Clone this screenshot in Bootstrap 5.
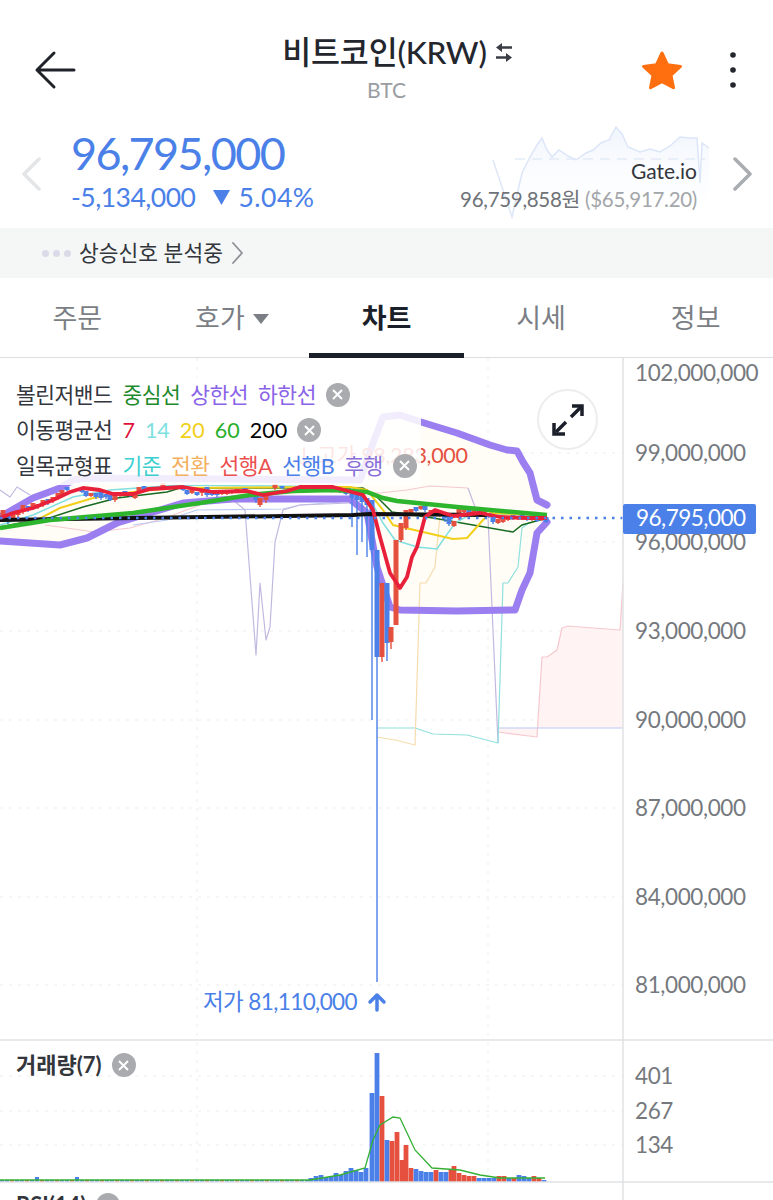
<!DOCTYPE html>
<html lang="ko">
<head>
  <meta charset="UTF-8">
  <meta name="viewport" content="width=device-width, initial-scale=1">
  <title>비트코인(KRW) 차트</title>
  <link href="https://cdn.jsdelivr.net/npm/bootstrap@5.3.0/dist/css/bootstrap.min.css" rel="stylesheet">
  <style>
    body {
      font-family: Lato, "Noto Sans CJK KR", sans-serif;
      background: #fff;
      color: #23262d;
      overflow: hidden;
    }
    .app-screen { width: 773px; height: 1200px; overflow: hidden; }
    .top-head { height: 125px; position: relative; }
    .head-back { left: 34px; top: 50px; }
    .head-center { padding-top: 28px; }
    .head-title { font-size: 31.5px; line-height: 48px; letter-spacing: -.2px; font-weight: 500; padding-left: 22px; }
    .head-sub { font-size: 21px; line-height: 28px; color: #9a9da1; }
    .head-actions { right: 36px; top: 50px; }
    .price-row { height: 103px; }
    .price-main { font-size: 45px; line-height: 56px; color: #4a80e8; letter-spacing: -1.6px; }
    .price-change { font-size: 26.5px; line-height: 32px; color: #4a80e8; letter-spacing: -.5px; }
    .price-pct { letter-spacing: .5px; }
    .price-left { padding-left: 71px; }
    .side-chev { width: 24px; top: 32px; }
    .spark-box { width: 773px; height: 103px; left: 0; top: 0; }
    .price-right { right: 76px; top: 32px; text-align: right; }
    .gate-name { font-size: 21px; line-height: 28px; color: #33363c; }
    .gate-price { font-size: 20.5px; line-height: 28px; color: #6f7378; letter-spacing: -.3px; }
    .gate-price span { color: #a3a6aa; }
    .signal-bar { height: 50px; background: #f5f6f6; padding-left: 42px; font-size: 21.5px; color: #33363c; }
    .signal-dot { width: 7px; height: 7px; border-radius: 50%; background: #d9dce8; }
    .tab-bar { height: 80px; border-bottom: 1px solid #dcdde0; }
    .tab-item { width: 20%; font-size: 27px; color: #7b7f85; text-decoration: none; margin-bottom: -1px; padding-top: 6px; border-bottom: 5px solid transparent; }
    .tab-item.is-on { color: #1b1f2a; font-weight: 700; border-bottom-color: #1b1f2a; }
    .tab-caret { width: 0; height: 0; border-left: 8px solid transparent; border-right: 8px solid transparent; border-top: 10px solid #7b7f85; margin-left: 8px; }
    .chart-wrap { height: 842px; }
    .chart-svg { display: block; }
    .axis-tx { font-size: 22.5px; fill: #75797e; letter-spacing: -.4px; }
    .legend-box { left: 0; top: 19px; width: 421px; height: 108px; padding: 0 0 0 16px; background: rgba(255,255,255,.86); font-size: 21.5px; }
    .legend-row { height: 35.5px; color: #33363c; letter-spacing: -.5px; column-gap: 10px; }
    .legend-num { letter-spacing: 0; }
    .close-dot { width: 24px; height: 24px; border-radius: 50%; background: #a9abae; flex: none; }
    .expand-btn { right: 175px; top: 31px; width: 61px; height: 61px; border-radius: 50%; border: 2px solid #eceded; background: #fff; }
    .vol-label { left: 16px; top: 692px; font-size: 22px; font-weight: 700; color: #33363c; line-height: 30px; column-gap: 10px; }
    .rsi-label { left: 16px; top: 832px; font-size: 22px; font-weight: 700; color: #33363c; line-height: 30px; column-gap: 10px; }
    .c-green { color: #1f8a2d; } .c-purple { color: #8a63e8; } .c-red { color: #e0103a; }
    .c-sky { color: #7fdfe0; } .c-yellow { color: #f2cf1a; } .c-lime { color: #2ab02a; } .c-black { color: #000; }
    .c-teal { color: #3ccfd0; } .c-orange { color: #f4b060; } .c-coral { color: #ec5050; } .c-blue { color: #4a80e8; } .c-violet { color: #8a6fd8; }
  </style>
</head>
<body>
  <div class="app-screen">
    <!-- header -->
    <header class="top-head text-center">
      <svg class="head-back position-absolute" width="42" height="40" viewBox="0 0 42 40" fill="none" stroke="#1f2229" stroke-width="3" stroke-linecap="round" stroke-linejoin="round"><path d="M40 20H3M20 3 3 20l17 17"/></svg>
      <div class="head-center">
        <div class="head-title d-flex justify-content-center align-items-center gap-2">
          <span>비트코인(KRW)</span>
          <svg width="18" height="21" viewBox="0 0 18 21" fill="#3a3d44"><path d="M7 1v3.200h10v2.600H7V10L1 5.500zM11 11l6 4.500-6 4.500v-3.200H1v-2.600h10z"/></svg>
        </div>
        <div class="head-sub">BTC</div>
      </div>
      <div class="head-actions position-absolute d-flex align-items-center">
        <svg width="42" height="40" viewBox="0 0 42 40" fill="#ff6f0f"><path stroke="#ff6f0f" stroke-width="3" stroke-linejoin="round" d="M21 3l5.600 11.800 12.900 1.600-9.500 8.800 2.500 12.600L21 31.600 9.500 37.800 12 25.200 2.500 16.400l12.900-1.600z"/></svg>
        <svg style="margin-left:46px" width="8" height="40" viewBox="0 0 8 40" fill="#23262d"><circle cx="4" cy="5" r="2.800"/><circle cx="4" cy="20" r="2.800"/><circle cx="4" cy="35" r="2.800"/></svg>
      </div>
    </header>

    <!-- price -->
    <section class="price-row position-relative">
      <svg class="spark-box position-absolute" viewBox="0 125 773 103" fill="none">
        <defs><linearGradient id="sparkFill" x1="0" y1="0" x2="0" y2="1"><stop offset="0" stop-color="#e6eefb" stop-opacity=".6"/><stop offset="1" stop-color="#fff" stop-opacity="0"/></linearGradient></defs>
        <path fill="url(#sparkFill)" d="M512 217 522 173 530 157 537 145 542 138 547 150 552 157 559 150 568 156 576 160 586 153 593 150 601 143 609 140 616 127 622 134 628 147 640 152 650 149 660 152 670 146 680 137 690 138 697 138 700 183 702 143 709 148V225H512z"/>
        <path stroke="#e4ebf8" stroke-dasharray="10 7" stroke-width="1.500" d="M515 159H705"/>
        <path stroke="#dce6f8" stroke-width="1.500" d="M493 160 512 217 522 173 530 157 537 145 542 138 547 150 552 157 559 150 568 156 576 160 586 153 593 150 601 143 609 140 616 127 622 134 628 147 640 152 650 149 660 152 670 146 680 137 690 138 697 138 700 183 702 143 709 148"/>
      </svg>
      <svg class="side-chev position-absolute" style="left:20px" height="34" viewBox="0 0 24 34" fill="none" stroke="#e3e5e7" stroke-width="3.500" stroke-linecap="round" stroke-linejoin="round"><path d="M19 2 4 17l15 15"/></svg>
      <svg class="side-chev position-absolute" style="left:731px" height="34" viewBox="0 0 24 34" fill="none" stroke="#a9acb0" stroke-width="3.500" stroke-linecap="round" stroke-linejoin="round"><path d="M4 2l15 15L4 32"/></svg>
      <div class="price-left position-relative">
        <div class="price-main">96,795,000</div>
        <div class="price-change d-flex align-items-center">
          <span>-5,134,000</span>
          <svg style="margin:0 8px 0 18px" width="17" height="16" viewBox="0 0 17 16" fill="#4a80e8"><path d="M0 1h17L8.500 16z"/></svg>
          <span class="price-pct">5.04%</span>
        </div>
      </div>
      <div class="price-right position-absolute">
        <div class="gate-name">Gate.io</div>
        <div class="gate-price">96,759,858원 <span>($65,917.20)</span></div>
      </div>
    </section>

    <!-- signal -->
    <div class="signal-bar d-flex align-items-center">
      <span class="signal-dot me-1"></span><span class="signal-dot me-1"></span><span class="signal-dot"></span>
      <span class="ms-2">상승신호 분석중</span>
      <svg class="ms-2" width="13" height="24" viewBox="0 0 13 24" fill="none" stroke="#8d9095" stroke-width="1.800" stroke-linecap="round" stroke-linejoin="round"><path d="M2 2l9 10-9 10"/></svg>
    </div>

    <!-- tabs -->
    <nav class="tab-bar d-flex">
      <a class="tab-item d-flex align-items-center justify-content-center" href="#">주문</a>
      <a class="tab-item d-flex align-items-center justify-content-center" href="#">호가<span class="tab-caret"></span></a>
      <a class="tab-item is-on d-flex align-items-center justify-content-center" href="#">차트</a>
      <a class="tab-item d-flex align-items-center justify-content-center" href="#">시세</a>
      <a class="tab-item d-flex align-items-center justify-content-center" href="#">정보</a>
    </nav>

    <!-- chart -->
    <div class="chart-wrap position-relative">
      <svg id="chart" class="chart-svg" width="773" height="842" viewBox="0 358 773 842" fill="none">
        <g stroke="#eceded" stroke-dasharray="3 6" stroke-width="1">
          <path d="M197 358V1182M488 358V1182"/>
          <path d="M0 453H623M0 542H623M0 631H623M0 720H623M0 808H623M0 897H623M0 985H623M0 1076H623M0 1111H623M0 1145H623"/>
        </g>

        <!-- band fill and clouds -->
        <path fill="#fffdf6" d="M0 517 33 498 60 488 73 480 87 478 360 480 373 443 383 417 400 415 421 422 457 433 507 450 517 452 523 462 530 473 537 500 547 505V522L537 533 530 573 522 590 515 610 457 611 400 610 390 607 377 567 367 513 350 499 233 499 183 503 150 513 117 523 87 538 60 545 0 541z"/>
        <path fill="#fff3f3" d="M498 732 537 737 542 657 547 657 557 650 562 628 568 626 620 630 623 583V728H498z"/>

        <!-- ichimoku thin lines -->
        <g stroke-width="1.200" stroke-linejoin="round">
          <path stroke="#f6c9cf" d="M45 525 95 532 130 528 165 518 200 505M330 492 380 493 407 490 430 486 468 488M498 732 537 737 542 657 547 657 557 650 562 628 568 626 620 630 623 583"/>
          <path stroke="#b9c9f3" d="M133 525 167 520 197 510 283 509 300 505 340 502M498 728H622"/>
          <path stroke="#c3b9e0" d="M0 490 10 497 17 487 30 495M233 500 245 510 256 655 260 583 266 640 270 627 275 542 283 510 300 505 350 503 362 497 372 505M468 488 475 507 488 517 498 743"/>
          <path stroke="#8fe0df" d="M377 728 415 728 433 734 467 735 498 743 503 583 508 583 518 567 522 528 530 522"/>
          <path stroke="#f6dcae" d="M377 737 395 740 415 745 420 583 426 583 435 567 440 515"/>
        </g>

        <!-- bollinger -->
        <g stroke="#9b7ff0" stroke-width="7" stroke-linejoin="round" stroke-linecap="round">
          <path d="M0 517 33 498 60 488 73 480 87 478 360 480 373 443 383 417 400 415 421 422 457 433 490 445 507 450 517 451 523 462 530 473 537 500 547 505"/>
          <path d="M0 541 60 545 87 538 117 523 150 513 183 503 233 499 350 499 367 513 377 567 390 607 400 610 457 611 515 610 522 590 530 573 537 533 547 522"/>
        </g>
        <path stroke="#186a20" stroke-width="1.500" d="M0 527 20 523 43 520 83 507 117 498 167 492 180 488 363 488 377 497 392 512 433 518 473 525 513 532 522 525 547 518"/>

        <path stroke="#80dfe0" stroke-width="1.500" d="M0 525 33 515 73 497 110 490 180 485 350 487 372 503 383 523 395 540 417 547 437 549 443 540 455 523 473 513 547 516"/>
        <path stroke="#f2cf1a" stroke-width="2" d="M0 528 33 522 60 508 93 498 133 492 173 488 350 487 367 490 383 510 393 525 423 532 453 539 467 538 483 520 490 513 547 515"/>

        <g id="candles"></g>

        <!-- moving averages -->
        <path stroke="#111" stroke-width="4" d="M0 520 353 515 370 514 487 515"/>
        <path stroke="#2db52d" stroke-width="4.500" d="M0 528 50 520 133 513 200 503 250 495 293 491 333 490 367 492 383 498 397 501 457 507 547 515"/>
        <path stroke="#e8203a" stroke-width="3.800" stroke-linejoin="round" d="M0 518 13 513 33 508 53 500 70 492 83 488 100 490 113 494 133 494 150 489 183 487 213 492 247 491 263 495 287 491 300 487 333 487 363 495 373 510 380 537 390 573 400 588 407 577 412 557 417 547 425 517 435 510 453 516 480 513 500 517 527 518 547 518"/>
        <path stroke="#4a80e8" stroke-width="2.500" stroke-dasharray="2.500 6" d="M0 518H623"/>

        <!-- volume -->
        <g id="volumes"></g>
        <path stroke="#35b035" stroke-width="1.300" d="M0 1180H310L340 1175 365 1168 373 1140 380 1125 393 1117 400 1118 408 1135 415 1150 432 1168 460 1170 480 1175 500 1178 545 1178"/>

        <!-- panes -->
        <path stroke="#e1e2e4" stroke-width="1.500" d="M623 358V1200M0 1040H773M0 1182H773"/>

        <!-- labels -->
        <text x="296" y="463" font-size="21.500" fill="#e5503f" letter-spacing="-.3">↓ 고가 98,283,000</text>
        <text x="203" y="1010" font-size="22.500" fill="#4a80e8" letter-spacing="-.6">저가 81,110,000</text>
        <path stroke="#4a80e8" stroke-width="3.500" stroke-linecap="round" stroke-linejoin="round" d="M377 1010V995M370 1002l7-7 7 7"/>
        <g class="axis-tx">
          <text x="635" y="381">102,000,000</text>
          <text x="635" y="461">99,000,000</text>
          <text x="635" y="550">96,000,000</text>
          <text x="635" y="639">93,000,000</text>
          <text x="635" y="728">90,000,000</text>
          <text x="635" y="816">87,000,000</text>
          <text x="635" y="905">84,000,000</text>
          <text x="635" y="993">81,000,000</text>
          <text x="635" y="1084">401</text>
          <text x="635" y="1119">267</text>
          <text x="635" y="1153">134</text>
        </g>
        <rect x="623" y="504" width="133" height="30" rx="2" fill="#4a80e8"/>
        <text x="636" y="526" font-size="22.500" fill="#fff" letter-spacing="-.5">96,795,000</text>
      </svg>

      <!-- legend over the chart -->
      <div class="legend-box position-absolute">
        <div class="legend-row d-flex align-items-center">
          <span>볼린저밴드</span><span class="c-green">중심선</span><span class="c-purple">상한선</span><span class="c-purple">하한선</span>
          <span class="close-dot d-flex align-items-center justify-content-center"><svg width="11" height="11" viewBox="0 0 11 11" stroke="#fff" stroke-width="2"><path d="M1 1l9 9M10 1l-9 9"/></svg></span>
        </div>
        <div class="legend-row d-flex align-items-center">
          <span>이동평균선</span><span class="c-red legend-num">7</span><span class="c-sky legend-num">14</span><span class="c-yellow legend-num">20</span><span class="c-lime legend-num">60</span><span class="c-black legend-num">200</span>
          <span class="close-dot d-flex align-items-center justify-content-center"><svg width="11" height="11" viewBox="0 0 11 11" stroke="#fff" stroke-width="2"><path d="M1 1l9 9M10 1l-9 9"/></svg></span>
        </div>
        <div class="legend-row d-flex align-items-center">
          <span>일목균형표</span><span class="c-teal">기준</span><span class="c-orange">전환</span><span class="c-coral">선행A</span><span class="c-blue">선행B</span><span class="c-violet">후행</span>
          <span class="close-dot d-flex align-items-center justify-content-center"><svg width="11" height="11" viewBox="0 0 11 11" stroke="#fff" stroke-width="2"><path d="M1 1l9 9M10 1l-9 9"/></svg></span>
        </div>
      </div>

      <button class="expand-btn position-absolute p-0 d-flex align-items-center justify-content-center" type="button" aria-label="expand">
        <svg width="34" height="34" viewBox="0 0 34 34" fill="none" stroke="#1b1f2a" stroke-width="3.500"><path d="M20 14 31 3M5 29l10-10"/><path d="M21 3h10v10M3 20v11h11"/></svg>
      </button>

      <div class="vol-label position-absolute d-flex align-items-center">
        <span>거래량(7)</span>
        <span class="close-dot d-flex align-items-center justify-content-center"><svg width="11" height="11" viewBox="0 0 11 11" stroke="#fff" stroke-width="2"><path d="M1 1l9 9M10 1l-9 9"/></svg></span>
      </div>
      <div class="rsi-label position-absolute d-flex align-items-center">
        <span>RSI(14)</span>
        <span class="close-dot"></span>
      </div>
    </div>
  </div>

  <script src="https://cdn.jsdelivr.net/npm/bootstrap@5.3.0/dist/js/bootstrap.bundle.min.js"></script>
  <script>
    const BLUE = "#4a80e8", RED = "#e5503f";
    const NS = "http://www.w3.org/2000/svg";

    function addRect(parent, x, y, w, h, color) {
      const r = document.createElementNS(NS, "rect");
      r.setAttribute("x", x); r.setAttribute("y", y);
      r.setAttribute("width", w); r.setAttribute("height", h);
      r.setAttribute("fill", color);
      parent.appendChild(r);
    }

    // [x, top, bottom, wickBottom, up?]  up = red, down = blue
    const candles = [
      [3,510,518,522,1],[8,515,521,524,0],[13,512,518,520,1],[18,510,515,517,1],[23,505,512,514,1],[28,506,510,512,0],[33,503,508,510,1],[38,504,507,509,1],[43,500,505,507,1],[48,499,503,505,0],[53,497,501,503,1],[58,493,498,500,1],[62,490,495,497,1],[67,487,490,491,0],
      [82,488,492,493,0],[86,491,496,497,0],[91,493,496,497,1],[96,493,497,499,0],[101,492,498,500,0],[106,494,497,499,0],[110,495,500,501,0],[115,494,500,502,1],[120,492,496,497,1],[125,491,495,496,0],[130,492,496,497,0],[135,494,498,499,1],[139,487,492,494,1],[144,486,490,492,0],[149,487,490,491,1],[154,487,489,490,1],[163,483,488,489,1],
      [183,487,490,491,0],[187,490,494,495,0],[192,490,493,494,1],[197,492,495,496,0],[202,489,493,496,1],[207,487,495,497,0],[212,490,495,496,0],[217,490,495,497,0],[222,491,494,495,1],[227,491,494,495,1],[232,490,493,494,1],[237,489,492,493,1],[245,488,492,493,0],[251,491,494,495,1],[256,495,500,503,0],[260,498,505,507,1],[266,495,500,503,1],[275,484,488,490,1],[282,486,488,489,0],
      [305,487,489,490,0],[315,488,490,491,0],[325,488,490,491,0],[333,488,491,492,0],[340,489,492,493,0],[346,490,494,495,0],
      [352,493,498,527,0],[357,494,500,555,0],[362,495,502,542,0],[367,498,505,557,0],[372,500,550,720,0],[377,550,657,982,0],[382,583,657,662,1],[387,583,643,661,0],[391,627,642,649,1],[396,540,625,625,1],[401,523,540,542,1],[406,510,528,530,1],
      [411,509,513,514,1],[416,507,511,512,0],[421,506,509,510,1],[425,505,510,512,0],[431,510,514,515,1],[436,509,513,514,0],[441,511,515,516,1],[445,513,518,522,0],[449,516,524,526,0],[454,521,526,527,1],[459,508,518,520,1],[464,508,512,513,1],[469,510,514,515,0],[474,509,513,514,1],[479,511,515,516,0],[484,510,514,515,1],[489,513,517,518,0],[493,516,522,524,0],[498,519,523,524,1],[503,518,522,523,1],[508,517,520,521,1],[513,515,519,520,0],[518,516,519,520,1],[522,515,519,520,0],[527,516,520,521,0],[532,517,520,521,1],[537,518,521,522,0],[542,517,520,521,1],[546,517,522,523,0]
    ];
    const candleGroup = document.getElementById("candles");
    candles.forEach(([x, top, bottom, wick, up]) => {
      const color = up ? RED : BLUE;
      addRect(candleGroup, x - 2.5, top, 5, bottom - top, color);
      addRect(candleGroup, x - .7, top, 1.4, wick - top, color);
    });

    // [x, top, up?]  bars stand on the pane floor at 1182
    const vols = [
      [311,1178,0],[316,1176,0],[321,1175,0],[326,1177,0],[331,1177,0],[336,1173,0],[341,1175,0],[346,1171,0],[351,1168,0],[356,1170,0],[361,1172,0],[366,1168,0],
      [372,1093,0],[377,1053,0],[382,1096,1],[387,1140,0],[392,1141,1],[397,1132,1],[402,1160,1],[406,1145,1],[411,1168,1],[416,1169,0],[421,1171,0],[426,1172,0],[431,1172,0],[436,1170,1],[441,1172,0],[446,1172,0],[451,1169,1],[454,1166,1],[459,1173,1],[464,1175,1],[469,1176,1],[474,1176,1],[479,1178,0],[484,1178,0],[489,1178,0],[494,1178,0],[499,1176,1],[504,1176,1],[509,1178,0],[514,1178,1],[519,1175,0],[524,1176,0],[529,1178,0],[534,1176,1],[539,1178,1],[544,1180,0]
    ];
    const volGroup = document.getElementById("volumes");
    for (let x = 2; x < 308; x += 5) {
      const tall = x === 37 || x === 77;
      addRect(volGroup, x - 2, tall ? 1177 : 1180, 4, tall ? 5 : 2, x % 3 ? BLUE : RED);
    }
    vols.forEach(([x, top, up]) => addRect(volGroup, x - 2.4, top, 4.8, 1182 - top, up ? RED : BLUE));
  </script>
</body>
</html>
